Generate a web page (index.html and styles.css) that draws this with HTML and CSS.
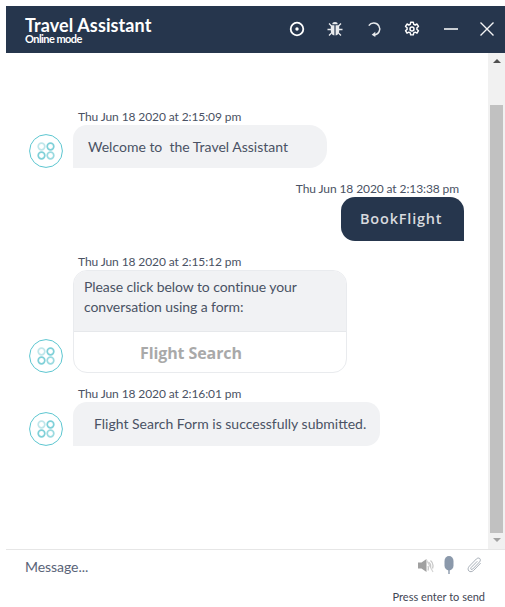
FILE: index.html
```html
<!DOCTYPE html>
<html lang="en">
<head>
    <meta charset="UTF-8">
    <meta name="viewport" content="width=device-width, initial-scale=1.0">
    <title>Travel Assistant</title>
    <link rel="stylesheet" href="styles.css">
</head>
<body>
    <div class="chat">
        <div class="chat-header">
            <div class="header-title">
                <div class="bot-name">Travel Assistant</div>
                <div class="bot-mode">Online mode</div>
            </div>
            <div class="header-icons">
                <svg class="h-icon" width="16" height="16" viewBox="0 0 16 16"><circle cx="8" cy="8" r="6.300" fill="none" stroke="#fff" stroke-width="1.800"/><circle cx="8" cy="8" r="1.700" fill="#fff"/></svg>
                <svg class="h-icon" width="16" height="16" viewBox="0 0 16 16"><g fill="none" stroke="#e8eaed" stroke-width="1.300"><path d="M4.500 5 2 2.500M11.500 5 14 2.500M4 8.500H.5M12 8.500h3.500M4.500 12 2 14.500M11.500 12l2.500 2.500"/></g><path d="M5.300 3.300a2.700 2.400 0 0 1 5.400 0z" fill="#e8eaed"/><path d="M3.800 4.200h3.600v10.300C5.200 14.300 3.800 12.500 3.800 10zM8.600 4.200h3.600V10c0 2.500-1.400 4.300-3.600 4.500z" fill="#e8eaed"/></svg>
                <svg class="h-icon" width="16" height="16" viewBox="0 0 16 16"><path d="M2.800 4.600A6 6 0 1 1 8.500 14" fill="none" stroke="#e8eaed" stroke-width="1.500"/><path d="M9.300 10.800 5.700 13.800l3.600 2.200z" fill="#e8eaed"/></svg>
                <svg class="h-icon" width="16" height="16" viewBox="0 0 24 24"><path d="M10 2h4l.6 3 2.200 1 2.700-1.500 2.200 3.700-2.300 2v2.400l2.300 2-2.200 3.700-2.700-1.500-2.200 1-.6 3h-4l-.6-3-2.200-1-2.700 1.500-2.200-3.700 2.300-2v-2.400l-2.300-2 2.200-3.700L7.200 6l2.200-1z" fill="none" stroke="#fff" stroke-width="2.200" stroke-linejoin="round"/><circle cx="12" cy="12" r="3" fill="none" stroke="#fff" stroke-width="2.200"/></svg>
                <svg class="h-icon min-icon" width="14" height="14" viewBox="0 0 14 14"><path d="M0 7h14" stroke="#f4f5f6" stroke-width="1.600"/></svg>
                <svg class="h-icon close-icon" width="14" height="14" viewBox="0 0 14 14"><path d="M.5.500l13 13M13.500.500l-13 13" stroke="#f4f5f6" stroke-width="1.400"/></svg>
            </div>
        </div>

        <div class="chat-main">
            <div class="messages">
                <div class="msg">
                    <svg class="avatar" width="34" height="34" viewBox="0 0 34 34"><use href="#bot"/></svg>
                    <div class="msg-body">
                        <div class="msg-time">Thu Jun 18 2020 at 2:15:09 pm</div>
                        <div class="bubble bubble-welcome">Welcome to &nbsp;the Travel Assistant</div>
                    </div>
                </div>
                <div class="msg msg-user">
                    <div class="msg-body">
                        <div class="msg-time">Thu Jun 18 2020 at 2:13:38 pm</div>
                        <div class="bubble bubble-user">BookFlight</div>
                    </div>
                </div>
                <div class="msg">
                    <svg class="avatar" width="34" height="34" viewBox="0 0 34 34"><use href="#bot"/></svg>
                    <div class="msg-body">
                        <div class="msg-time">Thu Jun 18 2020 at 2:15:12 pm</div>
                        <div class="form-card">
                            <div class="form-text">Please click below to continue your conversation using a form:</div>
                            <div class="form-link">Flight Search</div>
                        </div>
                    </div>
                </div>
                <div class="msg">
                    <svg class="avatar" width="34" height="34" viewBox="0 0 34 34"><use href="#bot"/></svg>
                    <div class="msg-body">
                        <div class="msg-time">Thu Jun 18 2020 at 2:16:01 pm</div>
                        <div class="bubble bubble-done">Flight Search Form is successfully submitted.</div>
                    </div>
                </div>
            </div>
            <div class="scrollbar">
                <div class="arrow-up"></div>
                <div class="thumb"></div>
                <div class="arrow-down"></div>
            </div>
        </div>

        <div class="chat-footer">
            <div class="input-row">
                <div class="placeholder">Message...</div>
                <div class="input-icons">
                    <svg class="icon-speaker" width="16" height="17" viewBox="0 0 16 17"><path d="M0 5.500h3.500L8.500 2v13l-5-3.500H0z" fill="#a0a0a0"/><path d="M8.500 3l6.500 12" fill="none" stroke="#d4d4d4" stroke-width="1.200"/><path d="M10.500 5c2 1.500 2.500 3 2 5.500M12.500 3.500c2.500 2 3 5 2 8M10 9c.5 1.500.5 3 0 4.500" fill="none" stroke="#c8c8c8" stroke-width="1.300"/></svg>
                    <svg class="icon-mic" width="10" height="18" viewBox="0 0 10 18"><path d="M.5 5a4.500 5 0 0 1 9 0v4.500a4.500 5 0 0 1-9 0z" fill="#8b99ab"/><path d="M5 13v5" stroke="#8b99ab" stroke-width="1.400"/></svg>
                    <svg class="icon-clip" width="17" height="18" viewBox="0 0 18 18"><path d="M15.500 7 8 14.800c-1.500 1.500-3.800 1.700-5 .5s-1-3.400.5-5L11 2.600c1.100-1.100 2.700-1.300 3.600-.4s.8 2.500-.3 3.600L7.200 13.200c-.6.600-1.400.7-1.900.3s-.4-1.300.2-1.900L12 5" fill="none" stroke="#a3aab4" stroke-width="1"/></svg>
                </div>
            </div>
            <div class="send-hint">Press enter to send</div>
        </div>
    </div>

    <svg width="0" height="0" class="defs">
        <symbol id="bot" viewBox="0 0 34 34">
            <circle cx="17" cy="17" r="16.400" fill="none" stroke="#5cc6d0" stroke-width="1"/>
            <g fill="none" stroke-width="1.700">
                <circle cx="12.500" cy="12.500" r="3.300" stroke="#bfe6ea"/>
                <circle cx="21.500" cy="12.500" r="3.300" stroke="#7fd0d8"/>
                <circle cx="12.500" cy="21.500" r="3.300" stroke="#7fd0d8"/>
                <circle cx="21.500" cy="21.500" r="3.300" stroke="#9adae0"/>
            </g>
        </symbol>
    </svg>
</body>
</html>
```

FILE: styles.css
```css
html, body {
    margin: 0;
    background: #fff;
}
body {
    padding: 6px 0 0 6px;
    font-family: "Lato", sans-serif;
    color: #4a5264;
}
.defs {
    position: absolute;
}
.chat {
    height: 601px;
    display: flex;
    flex-direction: column;
}

/* header */
.chat-header {
    height: 47px;
    flex: none;
    background: #26364d;
    display: flex;
    align-items: center;
    justify-content: space-between;
    padding-left: 19px;
}
.bot-name {
    font-size: 18px;
    font-weight: 700;
    line-height: 21px;
    color: #fff;
    letter-spacing: 0.1px;
}
.bot-mode {
    font-size: 11px;
    font-weight: 700;
    line-height: 10px;
    margin-top: -2px;
    color: #fff;
    letter-spacing: -0.55px;
}
.header-icons {
    display: flex;
    align-items: center;
    gap: 22.5px;
    padding: 0 11px 1px 0;
}
.min-icon {
    margin-left: 1.5px;
}
.close-icon {
    margin-left: -0.5px;
}

/* messages */
.chat-main {
    flex: 1;
    display: flex;
    min-height: 0;
}
.messages {
    flex: 1;
    padding: 56px 24px 0 23px;
}
.msg {
    display: flex;
    align-items: flex-end;
    gap: 10px;
    margin-bottom: 13px;
}
.msg-user {
    justify-content: flex-end;
}
.msg-user .msg-time {
    text-align: right;
    padding: 0 5px 0 0;
}
.msg-user .bubble {
    margin-left: auto;
}
.avatar {
    flex: none;
}
.msg-time {
    font-size: 12px;
    line-height: 16px;
    padding-left: 5px;
    color: #4a5264;
    letter-spacing: -0.1px;
}
.bubble {
    background: #f1f2f4;
    font-size: 14px;
    box-sizing: border-box;
}
.bubble-welcome {
    width: 254px;
    height: 43px;
    line-height: 43px;
    padding-left: 15px;
    border-radius: 14px 18px 18px 0;
}
.bubble-user {
    width: 123px;
    height: 44px;
    line-height: 43px;
    padding-left: 19px;
    background: #26364d;
    color: #d8dadf;
    font-family: "Open Sans", sans-serif;
    font-size: 14.5px;
    font-weight: 600;
    letter-spacing: 0.8px;
    border-radius: 14px 14px 0 14px;
}
.bubble-done {
    width: 307px;
    height: 44px;
    line-height: 44px;
    padding-left: 21px;
    border-radius: 14px 14px 14px 0;
}
.form-card {
    box-sizing: border-box;
    width: 274px;
    height: 103px;
    border: 1px solid #e9ebee;
    border-radius: 14px;
    overflow: hidden;
}
.form-text {
    background: #f1f2f4;
    height: 61px;
    padding: 6px 40px 0 10px;
    font-size: 14px;
    line-height: 20px;
    letter-spacing: -0.08px;
    box-sizing: border-box;
    border-bottom: 1px solid #e6e8eb;
}
.form-link {
    padding-left: 66px;
    font-family: "Open Sans", sans-serif;
    font-size: 16px;
    font-weight: 700;
    line-height: 43px;
    letter-spacing: -0.1px;
    color: #a9a9a9;
}

/* scrollbar */
.scrollbar {
    width: 17px;
    flex: none;
    background: #f1f1f1;
    display: flex;
    flex-direction: column;
    align-items: center;
}
.arrow-up {
    margin-top: 6px;
    border: 4px solid transparent;
    border-top: 0;
    border-bottom: 4px solid #505050;
}
.thumb {
    width: 13px;
    height: 428px;
    margin-top: 42px;
    background: #c1c1c1;
}
.arrow-down {
    margin-top: 5px;
    border: 4px solid transparent;
    border-bottom: 0;
    border-top: 4px solid #a3a3a3;
}

/* footer */
.chat-footer {
    height: 58px;
    flex: none;
    box-sizing: border-box;
    border-top: 1px solid #e6e6e6;
}
.input-row {
    display: flex;
    align-items: center;
    justify-content: space-between;
    height: 33px;
    padding: 0 22px 0 19px;
}
.placeholder {
    font-size: 14px;
    color: #5a6478;
    letter-spacing: -0.05px;
}
.input-icons {
    display: flex;
    align-items: center;
    margin-bottom: 3px;
}
.icon-mic {
    margin-left: 10px;
}
.icon-clip {
    margin-left: 12px;
}
.send-hint {
    font-size: 11px;
    line-height: 14px;
    margin-top: 7px;
    text-align: right;
    padding-right: 20px;
    color: #3f4654;
}
```
